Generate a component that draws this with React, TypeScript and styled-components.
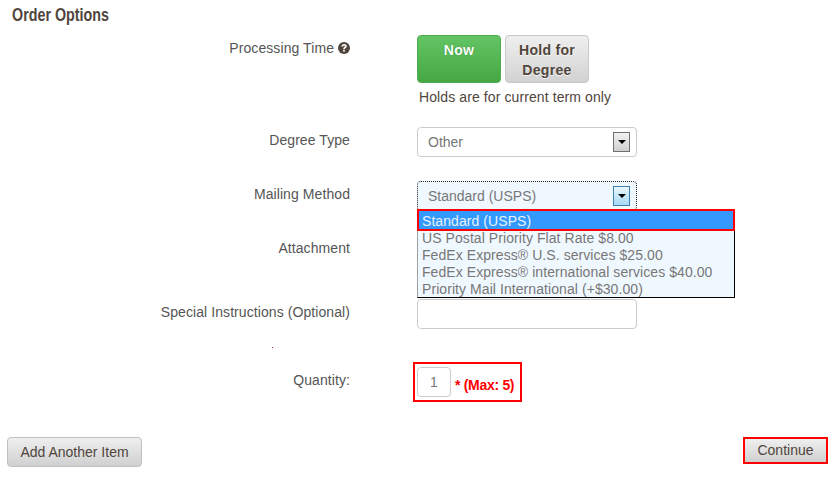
import React from 'react'
import styled, { createGlobalStyle } from 'styled-components'

const GlobalStyle = createGlobalStyle`
  html, body {
    margin: 0;
    padding: 0;
    background: #fff;
    font-family: 'Liberation Sans', Arial, sans-serif;
    color: #555;
  }
`

const Page = styled.div`
  width: 837px;
  height: 483px;
  overflow: hidden;
  position: relative;
`

const Heading = styled.h2`
  margin: 0;
  height: 35px;
  padding: 6px 0 0 12px;
  box-sizing: border-box;
  font-size: 18px;
  line-height: 19px;
  font-weight: 700;
  color: #50453c;
`

// no condensed face is installed, so the title is squeezed to the same width
const HeadingText = styled.span`
  display: inline-block;
  transform: scaleX(0.795);
  transform-origin: left center;
  white-space: nowrap;
`

const Row = styled.div<{ $height: number; $gap: number }>`
  display: grid;
  grid-template-columns: 350px 1fr;
  column-gap: 67px;
  height: ${({ $height }) => $height}px;
  margin-bottom: ${({ $gap }) => $gap}px;
`

const Label = styled.label<{ $top: number }>`
  display: block;
  padding-top: ${({ $top }) => $top}px;
  text-align: right;
  font-size: 14px;
  line-height: 20px;
  letter-spacing: 0.08px;
  color: #555;
`

const Control = styled.div`
  position: relative;
`

const HelpIcon = styled.svg`
  width: 12px;
  height: 12px;
  margin-left: 4px;
  vertical-align: -1px;
`

const ButtonGroup = styled.div`
  display: flex;
  gap: 4px;
`

const ChoiceButton = styled.button<{ $active?: boolean }>`
  width: 84px;
  height: 48px;
  padding: 4px 0 0;
  display: flex;
  flex-direction: column;
  align-items: center;
  justify-content: flex-start;
  box-sizing: border-box;
  border-radius: 4px;
  border: 1px solid ${({ $active }) => ($active ? '#4cae4c' : '#c8c8c8')};
  background: ${({ $active }) =>
    $active ? 'linear-gradient(#62c462, #45a845)' : 'linear-gradient(#efefef, #d2d2d2)'};
  color: ${({ $active }) => ($active ? '#fff' : '#50453c')};
  font-family: 'Liberation Sans', Arial, sans-serif;
  font-size: 14px;
  font-weight: 700;
  line-height: 20px;
  letter-spacing: 0.3px;
  text-shadow: ${({ $active }) =>
    $active ? '0 0 1px rgba(0, 80, 0, 0.5)' : '0 1px 0 rgba(255, 255, 255, 0.8)'};
`

const Note = styled.div`
  margin: 4px 0 0 2px;
  font-size: 14px;
  line-height: 20px;
  letter-spacing: 0.1px;
  color: #50453c;
`

const SelectBox = styled.div<{ $focused?: boolean }>`
  width: 220px;
  height: 30px;
  box-sizing: border-box;
  display: flex;
  align-items: center;
  justify-content: space-between;
  padding: 0 6px 0 10px;
  font-size: 14px;
  color: #777;
  background: ${({ $focused }) => ($focused ? '#f0f8ff' : '#fff')};
  border: 1px ${({ $focused }) => ($focused ? 'dotted #222' : 'solid #ccc')};
  border-radius: 4px;
`

const SelectArrow = styled.span<{ $focused?: boolean }>`
  width: 17px;
  height: 20px;
  box-sizing: border-box;
  display: flex;
  align-items: center;
  justify-content: center;
  border: 1px solid ${({ $focused }) => ($focused ? '#3c7fb1' : '#707070')};
  background: ${({ $focused }) =>
    $focused ? 'linear-gradient(#eaf6fd, #a7d8f5)' : 'linear-gradient(#f2f2f2, #cfcfcf)'};

  &::after {
    content: '';
    border-left: 4px solid transparent;
    border-right: 4px solid transparent;
    border-top: 4px solid #000;
  }
`

const Dropdown = styled.ul`
  position: absolute;
  top: 28px;
  left: 0;
  z-index: 2;
  width: 318px;
  height: 89px;
  margin: 0;
  padding: 0;
  list-style: none;
  box-sizing: border-box;
  background: #f0f8ff;
  border: 1px solid #000;
  border-left-color: #a0a0a0;
`

const Option = styled.li<{ $selected?: boolean }>`
  height: 17px;
  padding-left: 4px;
  font-size: 14px;
  line-height: 17px;
  letter-spacing: 0.07px;
  white-space: nowrap;
  color: ${({ $selected }) => ($selected ? '#e8f2fb' : '#777')};
  background: ${({ $selected }) => ($selected ? '#3399ff' : 'transparent')};
`

const SelectedOption = styled(Option)`
  height: 22px;
  margin: -1px -1px -1px -1px;
  padding-left: 3px;
  box-sizing: border-box;
  border: 2px solid #f00;
  line-height: 20px;
`

const TextBox = styled.div<{ $width: number }>`
  width: ${({ $width }) => $width}px;
  height: 30px;
  box-sizing: border-box;
  border: 1px solid #ccc;
  border-radius: 4px;
  background: #fff;
  font-size: 14px;
  line-height: 28px;
  text-align: center;
  color: #777;
`

const QuantityFrame = styled.div`
  position: absolute;
  left: -4px;
  top: 0;
  width: 109px;
  height: 40px;
  box-sizing: border-box;
  border: 2px solid #f00;
  padding: 3px 0 0 2px;
  display: flex;
  align-items: flex-start;
  gap: 4px;
`

const MaxNote = styled.span`
  padding-top: 8px;
  font-size: 14px;
  line-height: 20px;
  font-weight: 700;
  letter-spacing: -0.3px;
  color: #f00;
  white-space: nowrap;
`

const Speck = styled.span`
  position: absolute;
  left: 272px;
  top: 347px;
  width: 1px;
  height: 1px;
  background: #a33;
`

const Footer = styled.div`
  display: flex;
  justify-content: space-between;
  align-items: flex-start;
  padding: 0 9px 0 7px;
`

const ActionButton = styled.button`
  width: 135px;
  height: 30px;
  box-sizing: border-box;
  padding: 0;
  border: 1px solid #c0c0c0;
  border-radius: 4px;
  background: linear-gradient(#efefef, #d0d0d0);
  color: #50453c;
  font-family: inherit;
  font-size: 14px;
`

const ContinueButton = styled(ActionButton)`
  width: 85px;
  height: 27px;
  padding: 0 0 2px;
  border: 2px solid #f00;
  border-radius: 0;
`

const App = () => {
  return (
    <Page>
      <GlobalStyle />
      <Heading>
        <HeadingText>Order Options</HeadingText>
      </Heading>

      <Row $height={70} $gap={22}>
        <Label $top={3}>
          Processing Time
          <HelpIcon viewBox="0 0 24 24">
            <circle cx="12" cy="12" r="12" fill="#50453c" />
            <path
              d="M6.800 9.200C7 6 9.300 4 12.300 4c3 0 5.200 1.900 5.200 4.500 0 3.600-3.900 3.700-3.900 6h-3.300c0-4 3.700-4.100 3.700-5.900 0-.9-.7-1.500-1.700-1.500-1.100 0-1.900.8-2 2.100z"
              fill="#fff"
            />
            <rect x="10.300" y="16" width="3.300" height="3.200" fill="#fff" />
          </HelpIcon>
        </Label>
        <Control>
          <ButtonGroup>
            <ChoiceButton $active>Now</ChoiceButton>
            <ChoiceButton>
              <span>Hold for</span>
              <span>Degree</span>
            </ChoiceButton>
          </ButtonGroup>
          <Note>Holds are for current term only</Note>
        </Control>
      </Row>

      <Row $height={30} $gap={24}>
        <Label $top={3}>Degree Type</Label>
        <Control>
          <SelectBox>
            Other
            <SelectArrow />
          </SelectBox>
        </Control>
      </Row>

      <Row $height={30} $gap={24}>
        <Label $top={3}>Mailing Method</Label>
        <Control>
          <SelectBox $focused>
            Standard (USPS)
            <SelectArrow $focused />
          </SelectBox>
          <Dropdown>
            <SelectedOption $selected>Standard (USPS)</SelectedOption>
            <Option>US Postal Priority Flat Rate $8.00</Option>
            <Option>FedEx Express® U.S. services $25.00</Option>
            <Option>FedEx Express® international services $40.00</Option>
            <Option>Priority Mail International (+$30.00)</Option>
          </Dropdown>
        </Control>
      </Row>

      <Row $height={30} $gap={34}>
        <Label $top={3}>Attachment</Label>
        <Control />
      </Row>

      <Row $height={30} $gap={33}>
        <Label $top={3}>Special Instructions (Optional)</Label>
        <Control>
          <TextBox $width={220} />
        </Control>
      </Row>

      <Speck />

      <Row $height={40} $gap={35}>
        <Label $top={8}>Quantity:</Label>
        <Control>
          <QuantityFrame>
            <TextBox $width={34}>1</TextBox>
            <MaxNote>* (Max: 5)</MaxNote>
          </QuantityFrame>
        </Control>
      </Row>

      <Footer>
        <ActionButton>Add Another Item</ActionButton>
        <ContinueButton>Continue</ContinueButton>
      </Footer>
    </Page>
  )
}

export default App
